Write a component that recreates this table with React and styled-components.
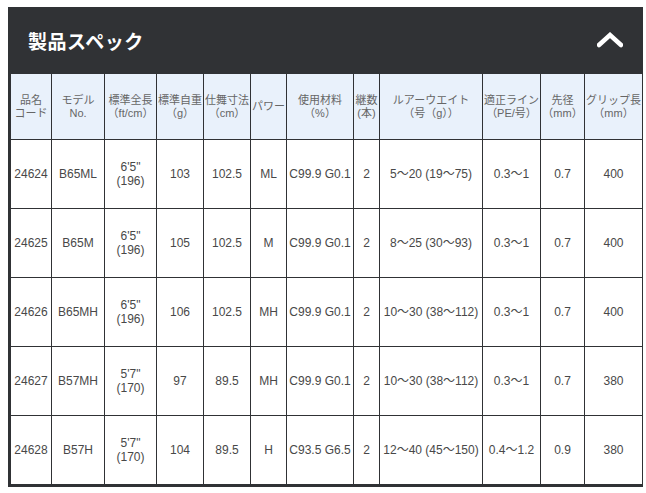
import React from 'react';
import styled, { createGlobalStyle } from 'styled-components';

const GlobalStyle = createGlobalStyle`
  body {
    margin: 7px 3px 0 8px;
    background: #ffffff;
    font-family: "Noto Sans CJK JP", "Noto Sans", sans-serif;
  }
`;

const Panel = styled.section`
  background: #303235;
  padding: 0 0 2px 2px;
`;

const TitleBar = styled.div`
  height: 66px;
  display: flex;
  align-items: center;
  justify-content: space-between;
  padding: 0 20px 0 20px;
  margin-left: -2px;
`;

const Title = styled.h2`
  margin: 0;
  color: #ffffff;
  font-size: 19px;
  font-weight: 700;
  letter-spacing: 0.5px;
`;

const Toggle = styled.button`
  background: none;
  border: none;
  padding: 0;
  width: 26px;
  height: 16px;
  display: flex;
  cursor: pointer;
`;

const Table = styled.table`
  width: 633px;
  border-collapse: collapse;
  table-layout: fixed;
  background: #ffffff;
  font-family: "Liberation Sans", "Noto Sans CJK JP", sans-serif;
`;

const HeadCell = styled.th`
  height: 65px;
  padding: 0;
  border: 1px solid #303235;
  background: #e9f1fb;
  color: #666;
  font-size: 11px;
  font-weight: 400;
  line-height: 13px;
  text-align: center;
  white-space: nowrap;
  overflow: hidden;
`;

const Cell = styled.td`
  height: 68px;
  padding: 0;
  border: 1px solid #303235;
  color: #484848;
  font-size: 12px;
  line-height: 14px;
  text-align: center;
  white-space: nowrap;
  overflow: hidden;
`;

const columns = [
  { w: 41, label: ['品名', 'コード'] },
  { w: 53, label: ['モデル', 'No.'] },
  { w: 52, label: ['標準全長', '（ft/cm）'] },
  { w: 47, label: ['標準自重', '（g）'] },
  { w: 47, label: ['仕舞寸法', '（cm）'] },
  { w: 36, label: ['パワー'] },
  { w: 67, label: ['使用材料', '（%）'] },
  { w: 26, label: ['継数', '(本)'] },
  { w: 103, label: ['ルアーウエイト', '（号（g））'] },
  { w: 58, label: ['適正ライン', '（PE/号）'] },
  { w: 44, label: ['先径', '（mm）'] },
  { w: 58, label: ['グリップ長', '（mm）'] },
];

const rows = [
  ['24624', 'B65ML', ['6\'5"', '(196)'], '103', '102.5', 'ML', 'C99.9 G0.1', '2', '5～20 (19～75)', '0.3～1', '0.7', '400'],
  ['24625', 'B65M', ['6\'5"', '(196)'], '105', '102.5', 'M', 'C99.9 G0.1', '2', '8～25 (30～93)', '0.3～1', '0.7', '400'],
  ['24626', 'B65MH', ['6\'5"', '(196)'], '106', '102.5', 'MH', 'C99.9 G0.1', '2', '10～30 (38～112)', '0.3～1', '0.7', '400'],
  ['24627', 'B57MH', ['5\'7"', '(170)'], '97', '89.5', 'MH', 'C99.9 G0.1', '2', '10～30 (38～112)', '0.3～1', '0.7', '380'],
  ['24628', 'B57H', ['5\'7"', '(170)'], '104', '89.5', 'H', 'C93.5 G6.5', '2', '12～40 (45～150)', '0.4～1.2', '0.9', '380'],
];

const Lines = ({ parts }) =>
  parts.map((p, i) => (
    <React.Fragment key={i}>
      {i > 0 && <br />}
      {p}
    </React.Fragment>
  ));

const App = () => (
  <>
    <GlobalStyle />
    <Panel>
      <TitleBar>
        <Title>製品スペック</Title>
        <Toggle aria-label="閉じる">
          <svg width="26" height="16" viewBox="0 0 26 16">
            <polyline points="2,13 13,3 24,13" fill="none" stroke="#fff" strokeWidth="4.5" strokeLinecap="round" strokeLinejoin="miter" />
          </svg>
        </Toggle>
      </TitleBar>
      <Table>
        <colgroup>
          {columns.map((c, i) => (
            <col key={i} style={{ width: c.w }} />
          ))}
        </colgroup>
        <thead>
          <tr>
            {columns.map((c, i) => (
              <HeadCell key={i}>
                <Lines parts={c.label} />
              </HeadCell>
            ))}
          </tr>
        </thead>
        <tbody>
          {rows.map((r, ri) => (
            <tr key={ri}>
              {r.map((v, ci) => (
                <Cell key={ci}>{Array.isArray(v) ? <Lines parts={v} /> : v}</Cell>
              ))}
            </tr>
          ))}
        </tbody>
      </Table>
    </Panel>
  </>
);

export default App;
